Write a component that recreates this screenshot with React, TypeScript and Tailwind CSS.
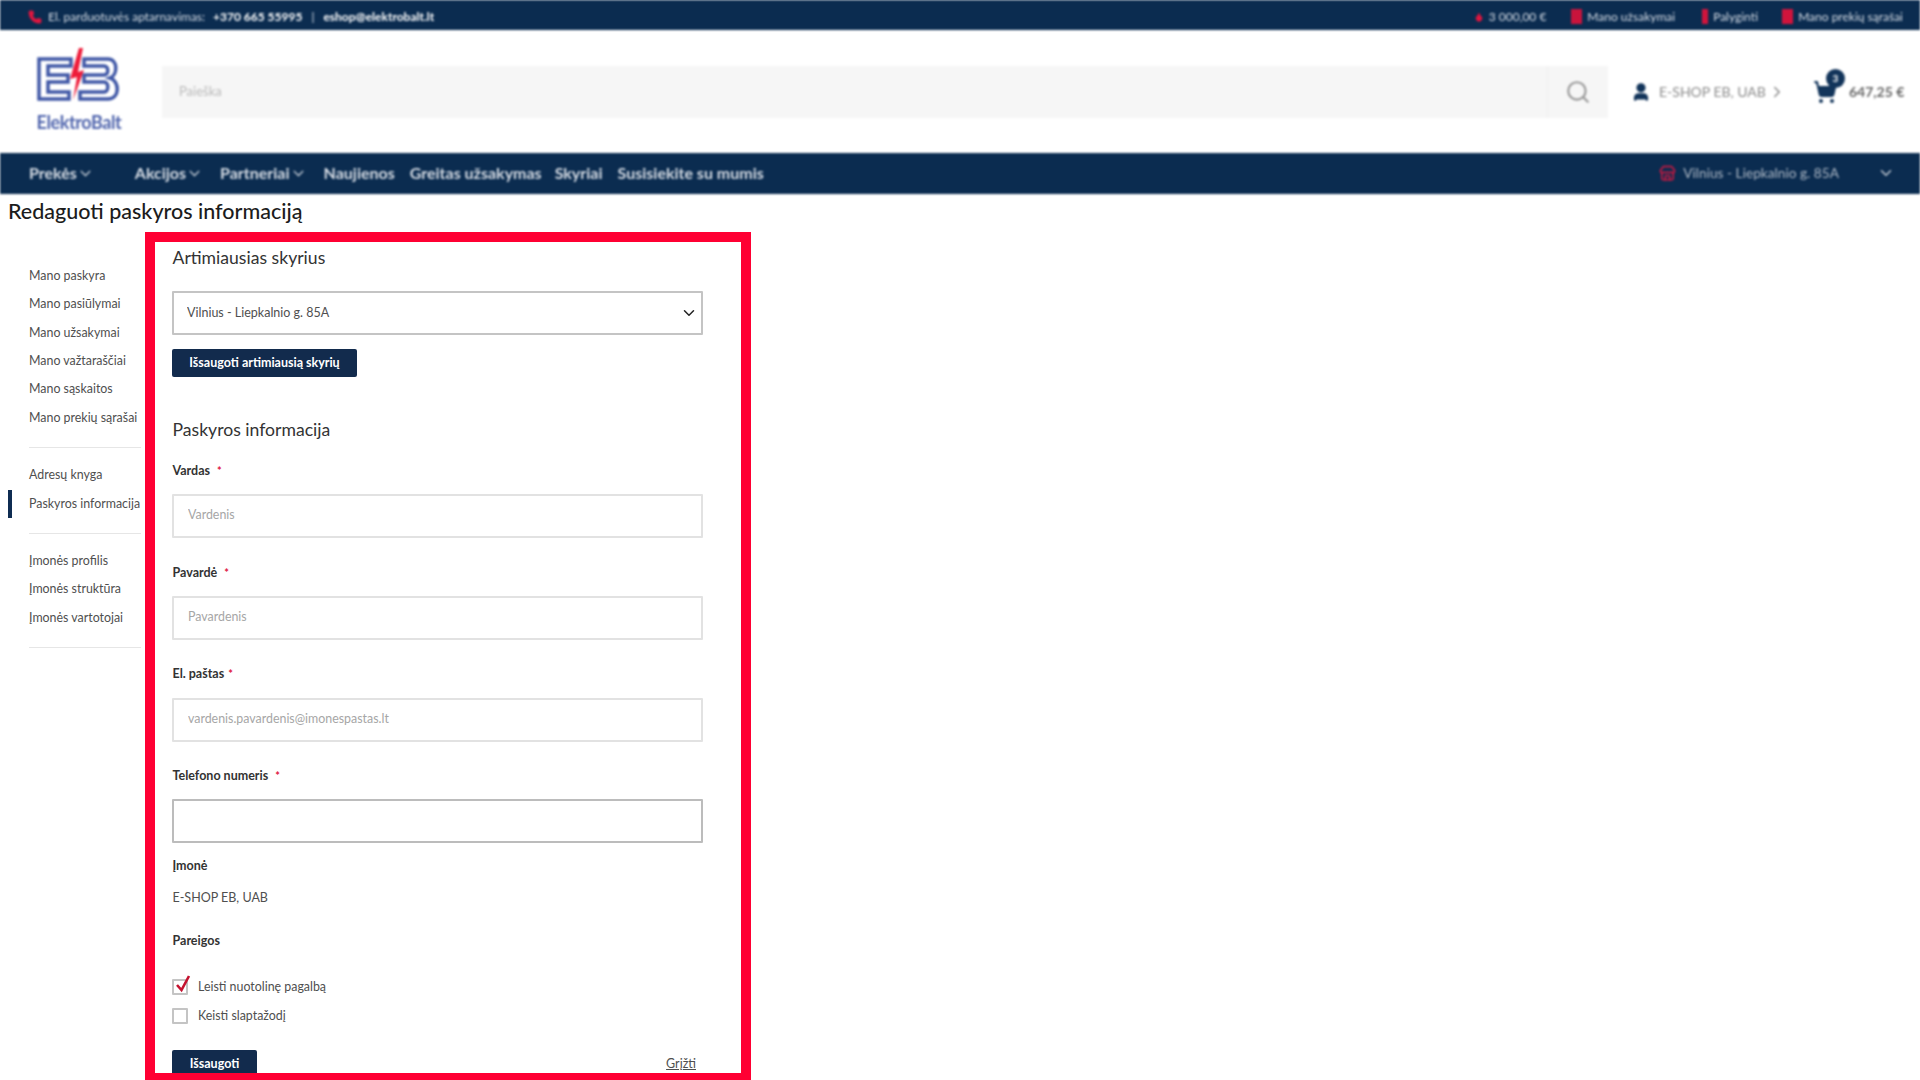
import { ChevronDown, ChevronRight, Droplet, Phone, Search, ShoppingCart, Store, User } from "lucide-react";
import type { ReactNode } from "react";

function Logo() {
  return (
    <div className="mt-[-4px] flex w-[86px] shrink-0 flex-col items-center">
      <svg width="86" height="62" viewBox="0 0 86 62" fill="none">
        <path d="M35 11H3V51H33V44H12V34H32V27H12V18H35Z" stroke="#3f57a6" strokeWidth="3.5" />
        <path d="M48 11H72C82 11 82 27 74 30C84 33 84 51 72 51H44V44H68C73 44 73 34 68 34H48V27H68C73 27 73 18 68 18H48Z" stroke="#3f57a6" strokeWidth="3.5" />
        <path d="M43 0L34 31L41 29L37 52L48 22L42 24L47 0Z" fill="#ee1c3a" />
      </svg>
      <span className="mt-[2px] text-[18px] leading-[20px] font-bold tracking-[-0.4px] text-[#5065ad]">ElektroBalt</span>
    </div>
  );
}

function TopLink({ icon, label, className }: { icon: ReactNode; label: string; className: string }) {
  return (
    <span className={`flex items-center gap-[5px] ${className}`}>
      {icon}
      {label}
    </span>
  );
}

function Header() {
  return (
    <div className="blur-[1px]">
      {/* Top bar */}
      <div className="flex h-[30px] items-center justify-between bg-[#0b2c50] pt-[3px] pr-[17px] pl-[28px] text-[12px] text-[#d5dce5]">
        <div className="flex items-center">
          <Phone size={14} className="mr-[6px] fill-[#e0163f] text-[#e0163f]" />
          <span>El. parduotuvės aptarnavimas:</span>
          <span className="ml-[8px] font-bold text-white">+370 665 55995</span>
          <span className="mx-[9px]">|</span>
          <span className="font-bold text-white">eshop@elektrobalt.lt</span>
        </div>
        <div className="flex items-center">
          <TopLink icon={<Droplet size={10} fill="#e0163f" className="text-[#e0163f]" />} label="3 000,00 €" className="mr-[25px]" />
          <TopLink icon={<span className="h-[15px] w-[11px] bg-[#c9143c]" />} label="Mano užsakymai" className="mr-[27px]" />
          <TopLink icon={<span className="h-[15px] w-[6px] bg-[#d0143c]" />} label="Palyginti" className="mr-[24px]" />
          <TopLink icon={<span className="h-[15px] w-[11px] bg-[#d0143c]" />} label="Mano prekių sąrašai" className="" />
        </div>
      </div>

      {/* Logo, search, account */}
      <div className="flex h-[123px] items-center whitespace-nowrap bg-white pr-[17px] pl-[36px]">
        <Logo />
        <div className="ml-[40px] flex h-[52px] w-[1446px] shrink-0 items-center bg-[#f6f6f6]">
          <span className="ml-[17px] flex-1 text-[13px] text-[#b9b9b9]">Paieška</span>
          <div className="flex h-full w-[61px] items-center justify-center border-l border-[#efefef]">
            <Search size={26} className="text-[#9a9a9a]" />
          </div>
        </div>
        <User size={20} strokeWidth={3} className="ml-[23px] shrink-0 fill-[#12345a] text-[#12345a]" />
        <span className="ml-[8px] text-[14px] text-[#8b8b8b]">E-SHOP EB, UAB</span>
        <ChevronRight size={18} className="ml-[2px] shrink-0 text-[#8b8b8b]" />
        <div className="relative ml-[27px] shrink-0">
          <ShoppingCart size={24} className="fill-[#12345a] text-[#12345a]" />
          <span className="absolute top-[-11px] left-[13px] flex h-[19px] w-[19px] items-center justify-center rounded-full bg-[#12345a] text-[10px] font-bold text-white">
            3
          </span>
        </div>
        <span className="ml-[12px] text-[14px] font-bold text-[#666666]">647,25 €</span>
      </div>

      {/* Main nav */}
      <div className="flex h-[41px] items-center bg-[#0b2c50] pr-[25px] pb-[1px] pl-[29px] text-[16px] font-bold text-[#d8dee6]">
        <span>Prekės</span>
        <ChevronDown size={17} className="text-[#aab6c4]" />
        <span className="ml-[41px]">Akcijos</span>
        <ChevronDown size={17} className="text-[#aab6c4]" />
        <span className="ml-[17px]">Partneriai</span>
        <ChevronDown size={17} className="text-[#aab6c4]" />
        <span className="ml-[17px]">Naujienos</span>
        <span className="ml-[15px]">Greitas užsakymas</span>
        <span className="ml-[13px]">Skyriai</span>
        <span className="ml-[15px]">Susisiekite su mumis</span>
        <Store size={17} className="mr-[7px] ml-auto text-[#e0163f]" />
        <span className="text-[13.7px] font-normal text-[#aeb9c6]">Vilnius - Liepkalnio g. 85A</span>
        <ChevronDown size={18} className="ml-[38px] text-[#c4ccd6]" />
      </div>
    </div>
  );
}

const menuGroups = [
  ["Mano paskyra", "Mano pasiūlymai", "Mano užsakymai", "Mano važtaraščiai", "Mano sąskaitos", "Mano prekių sąrašai"],
  ["Adresų knyga", "Paskyros informacija"],
  ["Įmonės profilis", "Įmonės struktūra", "Įmonės vartotojai"],
];

function Sidebar() {
  return (
    <aside className="mt-[30px] ml-[8px] w-[133px] shrink-0 text-[12.4px] text-[#4f4f4f]">
      {menuGroups.map((group) => (
        <div key={group[0]} className="mb-[13px]">
          {group.map((item) => (
            <div
              key={item}
              className={`flex h-[28.4px] items-center whitespace-nowrap border-l-[4px] pl-[17px] ${
                item === "Paskyros informacija" ? "border-[#0f2c52]" : "border-transparent"
              }`}
            >
              {item}
            </div>
          ))}
          <div className="mt-[15px] ml-[21px] border-b border-[#e6e6e6]" />
        </div>
      ))}
    </aside>
  );
}

function Label({ text, star }: { text: string; star?: string }) {
  return (
    <div className="flex h-[18px] items-center text-[12.5px] leading-[18px] font-bold text-[#333333]">
      {text}
      {star && <span className={`text-[11px] text-[#e0163f] ${star}`}>*</span>}
    </div>
  );
}

function Field({ placeholder, className }: { placeholder?: string; className?: string }) {
  return (
    <input
      placeholder={placeholder}
      className={`block h-[44px] w-[531px] rounded-[1px] border-2 px-[14px] pb-[3px] text-[12.4px] placeholder:text-[#a6a6a6] ${className}`}
    />
  );
}

function Check({ checked, label, className }: { checked?: boolean; label: string; className: string }) {
  return (
    <div className={`flex h-[18px] items-center text-[12.4px] text-[#4f4f4f] ${className}`}>
      <span className="relative h-[16px] w-[16px] rounded-[1px] border-2 border-[#c4c4c4]">
        {checked && (
          <svg width="18" height="20" viewBox="0 0 18 20" fill="none" className="absolute top-[-7px] left-0">
            <path d="M3 11L7.5 16L15 2" stroke="#c4122f" strokeWidth="2.6" />
          </svg>
        )}
      </span>
      <span className="ml-[10px]">{label}</span>
    </div>
  );
}

function AccountForm() {
  return (
    <section className="h-[848px] w-[606px] shrink-0 overflow-hidden border-[10px] border-b-[7px] border-[#ff0033] pl-[17px]">
      <h2 className="flex h-[32px] items-center pl-[0.5px] text-[17.6px] text-[#333333]">Artimiausias skyrius</h2>
      <div className="relative mt-[17px] w-[531px]">
        <select className="block h-[44px] w-full appearance-none rounded-[1px] border-2 border-[#c4c4c4] px-[13px] text-[12.5px] text-[#4f4f4f]">
          <option>Vilnius - Liepkalnio g. 85A</option>
        </select>
        <ChevronDown size={18} strokeWidth={2} className="absolute top-[13px] right-[5px] text-[#222222]" />
      </div>
      <button className="mt-[14px] block h-[28px] w-[185px] rounded-[2px] bg-[#122b4d] text-[12.5px] font-bold text-white">
        Išsaugoti artimiausią skyrių
      </button>

      <h2 className="mt-[39px] flex h-[28px] items-center pl-[0.5px] text-[17.6px] text-[#333333]">Paskyros informacija</h2>
      <div className="mt-[18px] pl-[0.5px]">
        <Label text="Vardas" star="ml-[7px]" />
      </div>
      <Field placeholder="Vardenis" className="mt-[14px] border-[#e2e2e2]" />
      <div className="mt-[26px] pl-[0.5px]">
        <Label text="Pavardė" star="ml-[7px]" />
      </div>
      <Field placeholder="Pavardenis" className="mt-[14px] border-[#e2e2e2]" />
      <div className="mt-[25px] pl-[0.5px]">
        <Label text="El. paštas" star="ml-[4px]" />
      </div>
      <Field placeholder="vardenis.pavardenis@imonespastas.lt" className="mt-[15px] border-[#e2e2e2]" />
      <div className="mt-[25px] pl-[0.5px]">
        <Label text="Telefono numeris" star="ml-[7px]" />
      </div>
      <Field className="mt-[14px] border-[#bcbcbc]" />
      <div className="mt-[14px] pl-[0.5px]">
        <Label text="Įmonė" />
      </div>
      <div className="mt-[14px] flex h-[18px] items-center pl-[0.5px] text-[12.5px] text-[#4f4f4f]">E-SHOP EB, UAB</div>
      <div className="mt-[25px] pl-[0.5px]">
        <Label text="Pareigos" />
      </div>
      <Check checked label="Leisti nuotolinę pagalbą" className="mt-[28px]" />
      <Check label="Keisti slaptažodį" className="mt-[11px]" />
      <div className="mt-[25px] flex w-[531px] items-center justify-between pr-[7px]">
        <button className="h-[28px] w-[85px] rounded-[2px] bg-[#122b4d] text-[12.5px] font-bold text-white">Išsaugoti</button>
        <a href="#" className="text-[12.5px] text-[#4f4f4f] underline">Grįžti</a>
      </div>
    </section>
  );
}

export default function App() {
  return (
    <main className="h-[1080px] overflow-hidden bg-white font-[Lato,'Liberation_Sans',sans-serif]">
      <Header />
      <h1 className="flex h-[38px] items-center pb-[3px] pl-[8px] text-[21.5px] font-medium text-[#1c1c1c]">Redaguoti paskyros informaciją</h1>
      <div className="flex items-start gap-[4px]">
        <Sidebar />
        <AccountForm />
      </div>
    </main>
  );
}
